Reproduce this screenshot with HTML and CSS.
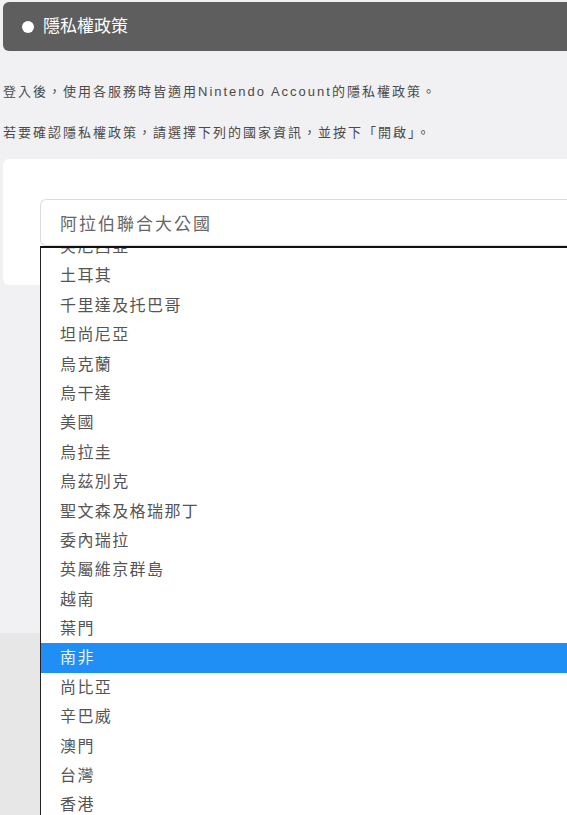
FILE: index.html
```html
<!DOCTYPE html>
<html lang="zh-Hant">
<head>
<meta charset="utf-8">
<link rel="stylesheet" href="styles.css">
</head>
<body>
<div class="page">
  <div class="main">
    <div class="header">
      <span class="dot"></span>
      <h1 class="title">隱私權政策</h1>
    </div>
    <p class="para para-first">登入後，使用各服務時皆適用Nintendo Account的隱私權政策。</p>
    <p class="para">若要確認隱私權政策，請選擇下列的國家資訊，並按下「開啟」。</p>
    <div class="card">
      <div class="select-wrap">
        <div class="select">阿拉伯聯合大公國</div>
        <div class="dropdown">
          <ul class="options">
            <li>突尼西亞</li>
            <li>土耳其</li>
            <li>千里達及托巴哥</li>
            <li>坦尚尼亞</li>
            <li>烏克蘭</li>
            <li>烏干達</li>
            <li>美國</li>
            <li>烏拉圭</li>
            <li>烏茲別克</li>
            <li>聖文森及格瑞那丁</li>
            <li>委內瑞拉</li>
            <li>英屬維京群島</li>
            <li>越南</li>
            <li>葉門</li>
            <li class="selected">南非</li>
            <li>尚比亞</li>
            <li>辛巴威</li>
            <li>澳門</li>
            <li>台灣</li>
            <li>香港</li>
            <li>日本</li>
          </ul>
        </div>
      </div>
    </div>
  </div>
  <div class="footer"></div>
</div>
</body>
</html>
```
FILE: styles.css
```css
html, body {
  margin: 0;
  padding: 0;
  height: 100%;
  overflow: hidden;
}
body {
  background: #f1f1f3;
  font-family: "Liberation Sans", "Noto Sans CJK TC", sans-serif;
  color: #444;
}
.page {
  display: flex;
  flex-direction: column;
  min-height: 100%;
}
.main {
  padding: 2px 0 0 3px;
  height: 633px;
  box-sizing: border-box;
}
.header {
  display: flex;
  align-items: center;
  height: 49px;
  margin-right: -12px;
  background: #5e5e5e;
  border-radius: 6px;
  padding-left: 19px;
}
.dot {
  width: 12px;
  height: 12px;
  border-radius: 50%;
  background: #fff;
  margin-right: 9px;
}
.title {
  margin: 0;
  font-size: 17px;
  font-weight: normal;
  color: #fff;
  letter-spacing: 0;
  line-height: 1;
}
.para {
  margin: 0;
  font-size: 13px;
  letter-spacing: 2px;
  line-height: 20px;
  color: #4a4a4a;
}
.para-first {
  margin-top: 31px;
}
.para + .para {
  margin-top: 21px;
}
.card {
  margin-top: 16px;
  margin-right: -12px;
  background: #fff;
  border-radius: 6px;
  padding: 40px 0 39px 37px;
}
.select-wrap {
  position: relative;
}
.select {
  height: 45px;
  border: 1px solid #dcdcdc;
  border-right: none;
  border-radius: 6px 0 0 6px;
  padding-left: 19px;
  display: flex;
  align-items: center;
  font-size: 17px;
  letter-spacing: 2px;
  color: #666;
  background: #fff;
}
.dropdown {
  position: absolute;
  top: 47px;
  left: 0;
  right: 0;
  height: 600px;
  overflow: hidden;
  background: #fff;
  border-top: 2px solid #111;
  border-left: 1px solid #222;
  z-index: 2;
}
.options {
  list-style: none;
  margin: -16px 0 0 0;
  padding: 0;
}
.options li {
  height: 29.4px;
  line-height: 29.4px;
  padding-left: 19px;
  font-size: 16px;
  letter-spacing: 1.4px;
  color: #555;
}
.options li.selected {
  background: #1f8ff5;
  color: #eaf6ff;
}
.footer {
  flex: 1;
  background: #e7e7e7;
}
```
